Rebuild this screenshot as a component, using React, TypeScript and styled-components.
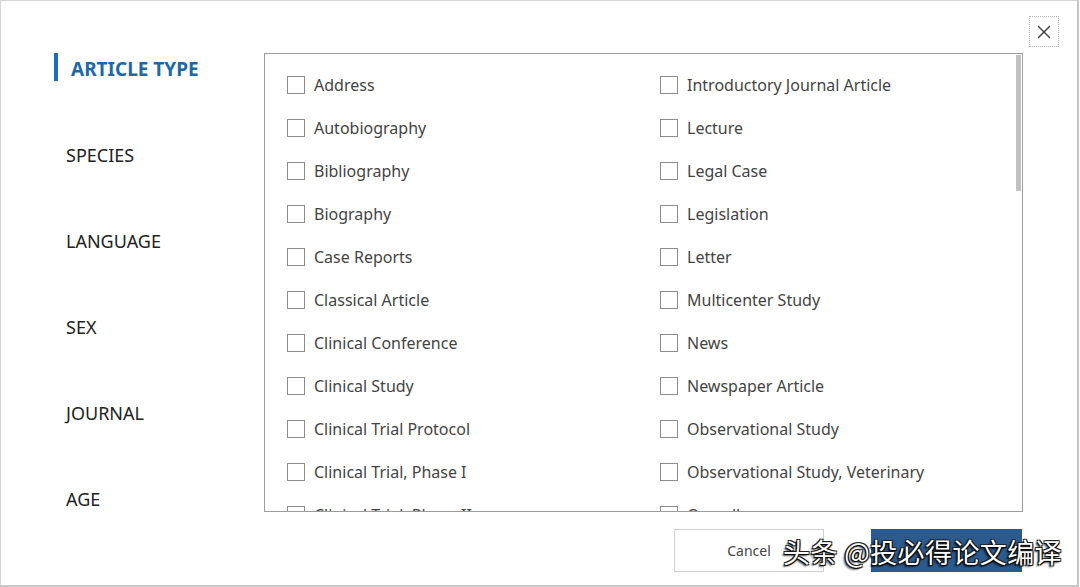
import React from "react";
import styled, { createGlobalStyle } from "styled-components";
import { X } from "lucide-react";

const GlobalStyle = createGlobalStyle`
  html, body {
    margin: 0;
    padding: 0;
    background: #ffffff;
  }
  body {
    font-family: "Noto Sans", "Open Sans", sans-serif;
    color: #333;
  }
`;

const Modal = styled.div`
  position: relative;
  box-sizing: border-box;
  width: 1079px;
  height: 587px;
  border: 1px solid #d4d4d4;
  border-right: 2px solid #c4c4c4;
  border-bottom: 2px solid #c8c8c8;
  background: #fff;
  display: flex;
  flex-direction: column;
`;

const Header = styled.div`
  height: 52px;
  display: flex;
  justify-content: flex-end;
  align-items: flex-start;
  padding-right: 18px;
  box-sizing: border-box;
`;

const CloseButton = styled.button`
  margin-top: 15px;
  width: 30px;
  height: 31px;
  border: 1px dotted #b5b5b5;
  background: transparent;
  padding: 0;
  display: flex;
  align-items: center;
  justify-content: center;
  color: #444;
  cursor: pointer;
`;

const Main = styled.div`
  display: flex;
`;

const Sidebar = styled.nav`
  width: 263px;
  box-sizing: border-box;
  padding-left: 53px;
  display: flex;
  flex-direction: column;
  gap: 58px;
`;

const NavItem = styled.div<{ $active?: boolean }>`
  height: 28px;
  display: flex;
  align-items: center;
  box-sizing: border-box;
  font-size: ${(p) => (p.$active ? "19px" : "18px")};
  font-weight: ${(p) => (p.$active ? 700 : 400)};
  color: ${(p) => (p.$active ? "#1d68a8" : "#222")};
  border-left: ${(p) => (p.$active ? "4px solid #1b72b9" : "none")};
  padding-left: ${(p) => (p.$active ? "13px" : "12px")};
  padding-top: ${(p) => (p.$active ? "3px" : "0")};
  margin-bottom: ${(p) => (p.$active ? "2px" : "0")};
  white-space: nowrap;
`;

const ListBox = styled.div`
  position: relative;
  width: 759px;
  height: 459px;
  box-sizing: border-box;
  border: 1px solid #9d9d9d;
  overflow: hidden;
`;

const OptionGrid = styled.div`
  display: grid;
  grid-template-columns: 373px 1fr;
  grid-auto-rows: 18px;
  row-gap: 25px;
  padding: 22px 0 0 22px;
`;

const Option = styled.label`
  display: flex;
  align-items: center;
  gap: 9px;
  font-size: 16px;
  line-height: 18px;
  color: #444;
  white-space: nowrap;
`;

const Box = styled.span`
  width: 18px;
  height: 18px;
  box-sizing: border-box;
  border: 1px solid #8c8c8c;
  background: #fff;
  flex-shrink: 0;
`;

const ScrollThumb = styled.div`
  position: absolute;
  top: 1px;
  right: 1px;
  width: 5px;
  height: 136px;
  background: #c2c2c2;
`;

const Footer = styled.div`
  display: flex;
  justify-content: flex-end;
  gap: 47px;
  padding-right: 55px;
  margin-top: 16px;
`;

const Button = styled.button<{ $primary?: boolean }>`
  width: ${(p) => (p.$primary ? "151px" : "150px")};
  height: 43px;
  box-sizing: border-box;
  font-family: "Noto Sans", sans-serif;
  font-size: 14px;
  color: ${(p) => (p.$primary ? "#fff" : "#444")};
  background: ${(p) => (p.$primary ? "#2b5b8e" : "#fff")};
  border: ${(p) => (p.$primary ? "none" : "1px solid #cfcfcf")};
  cursor: pointer;
`;

const Watermark = styled.div`
  position: absolute;
  left: 782px;
  top: 532px;
  font-family: "Noto Sans CJK SC", sans-serif;
  font-size: 27px;
  line-height: 38px;
  color: #fff;
  white-space: nowrap;
  letter-spacing: 0.4px;
  text-shadow: -1px 1px 1px #000, 1px 1px 1px #000, -1px -1px 0 #222, 1px -1px 0 #222, -2px 2px 2px rgba(0,0,0,0.6);
  pointer-events: none;
`;

const leftColumn = [
  "Address",
  "Autobiography",
  "Bibliography",
  "Biography",
  "Case Reports",
  "Classical Article",
  "Clinical Conference",
  "Clinical Study",
  "Clinical Trial Protocol",
  "Clinical Trial, Phase I",
  "Clinical Trial, Phase II",
];

const rightColumn = [
  "Introductory Journal Article",
  "Lecture",
  "Legal Case",
  "Legislation",
  "Letter",
  "Multicenter Study",
  "News",
  "Newspaper Article",
  "Observational Study",
  "Observational Study, Veterinary",
  "Overall",
];

const navItems = ["ARTICLE TYPE", "SPECIES", "LANGUAGE", "SEX", "JOURNAL", "AGE"];

export default function App() {
  // interleave the two columns row by row for the grid
  const options: string[] = [];
  leftColumn.forEach((l, i) => {
    options.push(l);
    options.push(rightColumn[i]);
  });

  return (
    <>
      <GlobalStyle />
      <Modal>
        <Header>
          <CloseButton aria-label="Close">
            <X size={22} strokeWidth={1.6} />
          </CloseButton>
        </Header>
        <Main>
          <Sidebar>
            {navItems.map((n, i) => (
              <NavItem key={n} $active={i === 0}>
                {n}
              </NavItem>
            ))}
          </Sidebar>
          <ListBox>
            <OptionGrid>
              {options.map((o) => (
                <Option key={o}>
                  <Box />
                  {o}
                </Option>
              ))}
            </OptionGrid>
            <ScrollThumb />
          </ListBox>
        </Main>
        <Footer>
          <Button>Cancel</Button>
          <Button $primary />
        </Footer>
        <Watermark>头条 @投必得论文编译</Watermark>
      </Modal>
    </>
  );
}
